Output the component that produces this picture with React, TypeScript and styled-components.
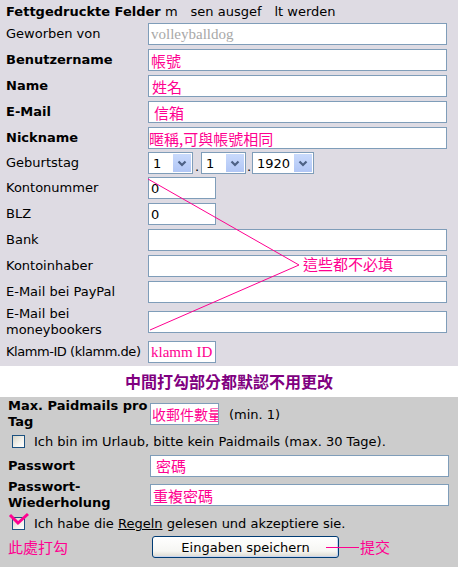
import React from "react";
import styled, { createGlobalStyle } from "styled-components";

const PINK = "#ff0090";
const CJK = `"Noto Sans CJK TC", "Noto Sans CJK SC", sans-serif`;

const GlobalStyle = createGlobalStyle`
  html, body { margin: 0; padding: 0; background: #cccccc; }
  body {
    font-family: "DejaVu Sans", Verdana, sans-serif;
    font-size: 13px;
    color: #000;
  }
  * { box-sizing: border-box; }
`;

const Page = styled.div`
  width: 458px;
  height: 567px;
  display: flex;
  flex-direction: column;
  overflow: hidden;
`;

const TopSection = styled.section`
  position: relative;
  background: #dedbe3;
  padding: 0 11px 0 6px;
  display: flex;
  flex-direction: column;
`;

const HeaderRow = styled.div`
  height: 21px;
  padding-top: 2px;
  display: flex;
  align-items: center;
  white-space: pre;
`;

const Row = styled.div<{ $h: number; $col?: number }>`
  height: ${(p) => p.$h}px;
  display: grid;
  grid-template-columns: ${(p) => p.$col ?? 142}px 1fr;
  align-items: center;
`;

const Label = styled.div<{ $bold?: boolean; $tight?: boolean }>`
  font-weight: ${(p) => (p.$bold ? "bold" : "normal")};
  line-height: 16px;
  white-space: ${(p) => (p.$tight ? "nowrap" : "normal")};
  letter-spacing: ${(p) => (p.$tight ? "-0.45px" : "normal")};
`;

const TextField = styled.input<{ $w?: number; $serif?: boolean; $grey?: boolean; $pad?: number; $small?: boolean }>`
  width: ${(p) => (p.$w ? `${p.$w}px` : "100%")};
  height: 22px;
  margin: 0;
  padding: 0 0 0 ${(p) => p.$pad ?? 2}px;
  border: 1px solid #7f9db9;
  background: #fff;
  outline: none;
  font-family: ${(p) => (p.$serif ? `"Liberation Serif", "DejaVu Serif", serif` : CJK)};
  font-size: ${(p) => (p.$small ? 14 : 15)}px;
  color: ${(p) => (p.$grey ? "#a8a8a8" : PINK)};
`;

const PlainField = styled(TextField)`
  font-family: "DejaVu Sans", Verdana, sans-serif;
  font-size: 13px;
  color: #000;
`;

const DateGroup = styled.div`
  display: flex;
  align-items: center;
  height: 22px;
`;

const SelectBox = styled.div<{ $w: number }>`
  width: ${(p) => p.$w}px;
  height: 22px;
  border: 1px solid #7f9db9;
  background: #fff;
  display: flex;
  align-items: center;
  justify-content: space-between;
  padding: 1px 1px 1px 4px;
`;

const SelectValue = styled.span`
  font-size: 13px;
`;

const SelectArrow = styled.span`
  width: 18px;
  height: 18px;
  background: linear-gradient(180deg, #c9dafc 0%, #b1c6f5 100%);
  display: flex;
  align-items: center;
  justify-content: center;
`;

const Dot = styled.span<{ $w: number }>`
  width: ${(p) => p.$w}px;
  align-self: flex-end;
  text-align: center;
  line-height: 14px;
  font-size: 13px;
`;

const Overlay = styled.svg`
  position: absolute;
  left: 0;
  top: 0;
  pointer-events: none;
`;

const NoteText = styled.span<{ $x: number; $y: number }>`
  position: absolute;
  left: ${(p) => p.$x}px;
  top: ${(p) => p.$y}px;
  font-family: ${CJK};
  font-size: 15px;
  line-height: 18px;
  color: ${PINK};
  white-space: nowrap;
`;

const Band = styled.div`
  height: 31px;
  background: #fff;
  display: flex;
  align-items: center;
  justify-content: center;
  font-family: ${CJK};
  font-weight: bold;
  font-size: 16px;
  color: #800080;
  padding-bottom: 2px;
`;

const GreySection = styled.section`
  position: relative;
  flex: 1;
  background: #cccccc;
  padding: 0 9px 0 8px;
  display: flex;
  flex-direction: column;
`;

const InlineField = styled.div`
  display: flex;
  align-items: center;
  gap: 10px;
`;

const CheckRow = styled.div<{ $h: number }>`
  position: relative;
  height: ${(p) => p.$h}px;
  display: flex;
  align-items: center;
  gap: 9px;
  padding-left: 4px;
`;

const CheckBox = styled.span`
  width: 13px;
  height: 13px;
  border: 1px solid #1c5180;
  background: linear-gradient(135deg, #d8d5c8 0%, #f4f3ee 60%, #ffffff 100%);
  flex: none;
`;

const Underlined = styled.span`
  text-decoration: underline;
`;

const CheckMark = styled.svg`
  position: absolute;
  left: 0;
  top: 0;
`;

const BottomRow = styled.div`
  position: relative;
  height: 22px;
  display: grid;
  grid-template-columns: 144px auto;
  align-items: center;
`;

const Hint = styled.span`
  font-family: ${CJK};
  font-size: 15px;
  color: ${PINK};
  line-height: 18px;
`;

const SaveButton = styled.button`
  width: 187px;
  height: 22px;
  margin: 0;
  padding: 0;
  border: 1px solid #003c74;
  border-radius: 3px;
  background: linear-gradient(180deg, #ffffff 0%, #f6f6f3 70%, #dcdad0 100%);
  box-shadow: inset -1px -1px 0 #c8d4ee;
  font-family: "DejaVu Sans", Verdana, sans-serif;
  font-size: 13px;
  color: #000;
`;

const SubmitNote = styled.div`
  position: absolute;
  left: 318px;
  top: 2px;
  display: flex;
  align-items: center;
  gap: 1px;
`;

const NoteLine = styled.span`
  width: 33px;
  height: 1px;
  background: ${PINK};
`;

function Chevron() {
  return (
    <svg width="10" height="7" viewBox="0 0 10 7">
      <path d="M1.5 1.5 L5 5 L8.5 1.5" fill="none" stroke="#4d6185" strokeWidth="2.2" />
    </svg>
  );
}

function Select({ w, value }: { w: number; value: string }) {
  return (
    <SelectBox $w={w}>
      <SelectValue>{value}</SelectValue>
      <SelectArrow>
        <Chevron />
      </SelectArrow>
    </SelectBox>
  );
}

export default function App() {
  return (
    <>
      <GlobalStyle />
      <Page>
        <TopSection>
          <HeaderRow>
            <b>Fettgedruckte Felder</b>{" m\u2003sen ausgef\u2003lt werden"}
          </HeaderRow>
          <Row $h={26}>
            <Label>Geworben von</Label>
            <TextField $serif $grey defaultValue="volleyballdog" />
          </Row>
          <Row $h={26}>
            <Label $bold>Benutzername</Label>
            <TextField defaultValue="帳號" />
          </Row>
          <Row $h={26}>
            <Label $bold>Name</Label>
            <TextField $pad={3} defaultValue="姓名" />
          </Row>
          <Row $h={26}>
            <Label $bold>E-Mail</Label>
            <TextField $pad={5} defaultValue="信箱" />
          </Row>
          <Row $h={26}>
            <Label $bold>Nickname</Label>
            <TextField $pad={0} defaultValue="暱稱,可與帳號相同" />
          </Row>
          <Row $h={24}>
            <Label>Geburtstag</Label>
            <DateGroup>
              <Select w={45} value="1" />
              <Dot $w={8}>.</Dot>
              <Select w={45} value="1" />
              <Dot $w={6}>.</Dot>
              <Select w={62} value="1920" />
            </DateGroup>
          </Row>
          <Row $h={26}>
            <Label>Kontonummer</Label>
            <PlainField $w={68} defaultValue="0" />
          </Row>
          <Row $h={26}>
            <Label>BLZ</Label>
            <PlainField $w={68} defaultValue="0" />
          </Row>
          <Row $h={26}>
            <Label>Bank</Label>
            <TextField />
          </Row>
          <Row $h={26}>
            <Label>Kontoinhaber</Label>
            <TextField />
          </Row>
          <Row $h={26}>
            <Label>E-Mail bei PayPal</Label>
            <TextField />
          </Row>
          <Row $h={33}>
            <Label>
              E-Mail bei
              <br />
              moneybookers
            </Label>
            <TextField />
          </Row>
          <Row $h={28}>
            <Label $tight>Klamm-ID (klamm.de)</Label>
            <TextField $serif $w={68} defaultValue="klamm ID" />
          </Row>
          <Overlay width="458" height="366" viewBox="0 0 458 366">
            <polyline
              points="148,179 299,265 150,330"
              fill="none"
              stroke={PINK}
              strokeWidth="1"
            />
          </Overlay>
          <NoteText $x={303} $y={255}>這些都不必填</NoteText>
        </TopSection>

        <Band>中間打勾部分都默認不用更改</Band>

        <GreySection>
          <Row $h={34} $col={142}>
            <Label $bold>
              Max. Paidmails pro
              <br />
              Tag
            </Label>
            <InlineField>
              <TextField $w={69} $pad={1} $small defaultValue="收郵件數量" />
              <span>(min. 1)</span>
            </InlineField>
          </Row>
          <CheckRow $h={21}>
            <CheckBox />
            <span>Ich bin im Urlaub, bitte kein Paidmails (max. 30 Tage).</span>
          </CheckRow>
          <Row $h={27} $col={142}>
            <Label $bold>Passwort</Label>
            <TextField $pad={5} defaultValue="密碼" />
          </Row>
          <Row $h={32} $col={142}>
            <Label $bold>
              Passwort-
              <br />
              Wiederholung
            </Label>
            <TextField $pad={2} defaultValue="重複密碼" />
          </Row>
          <CheckRow $h={25}>
            <CheckBox />
            <span>
              Ich habe die <Underlined>Regeln</Underlined> gelesen und akzeptiere sie.
            </span>
            <CheckMark width="24" height="20" viewBox="0 0 24 20">
              <path d="M2 4 L10 12 L20 3" fill="none" stroke={PINK} strokeWidth="3" />
            </CheckMark>
          </CheckRow>
          <BottomRow>
            <Hint>此處打勾</Hint>
            <SaveButton type="button">Eingaben speichern</SaveButton>
            <SubmitNote>
              <NoteLine />
              <Hint>提交</Hint>
            </SubmitNote>
          </BottomRow>
        </GreySection>
      </Page>
    </>
  );
}
